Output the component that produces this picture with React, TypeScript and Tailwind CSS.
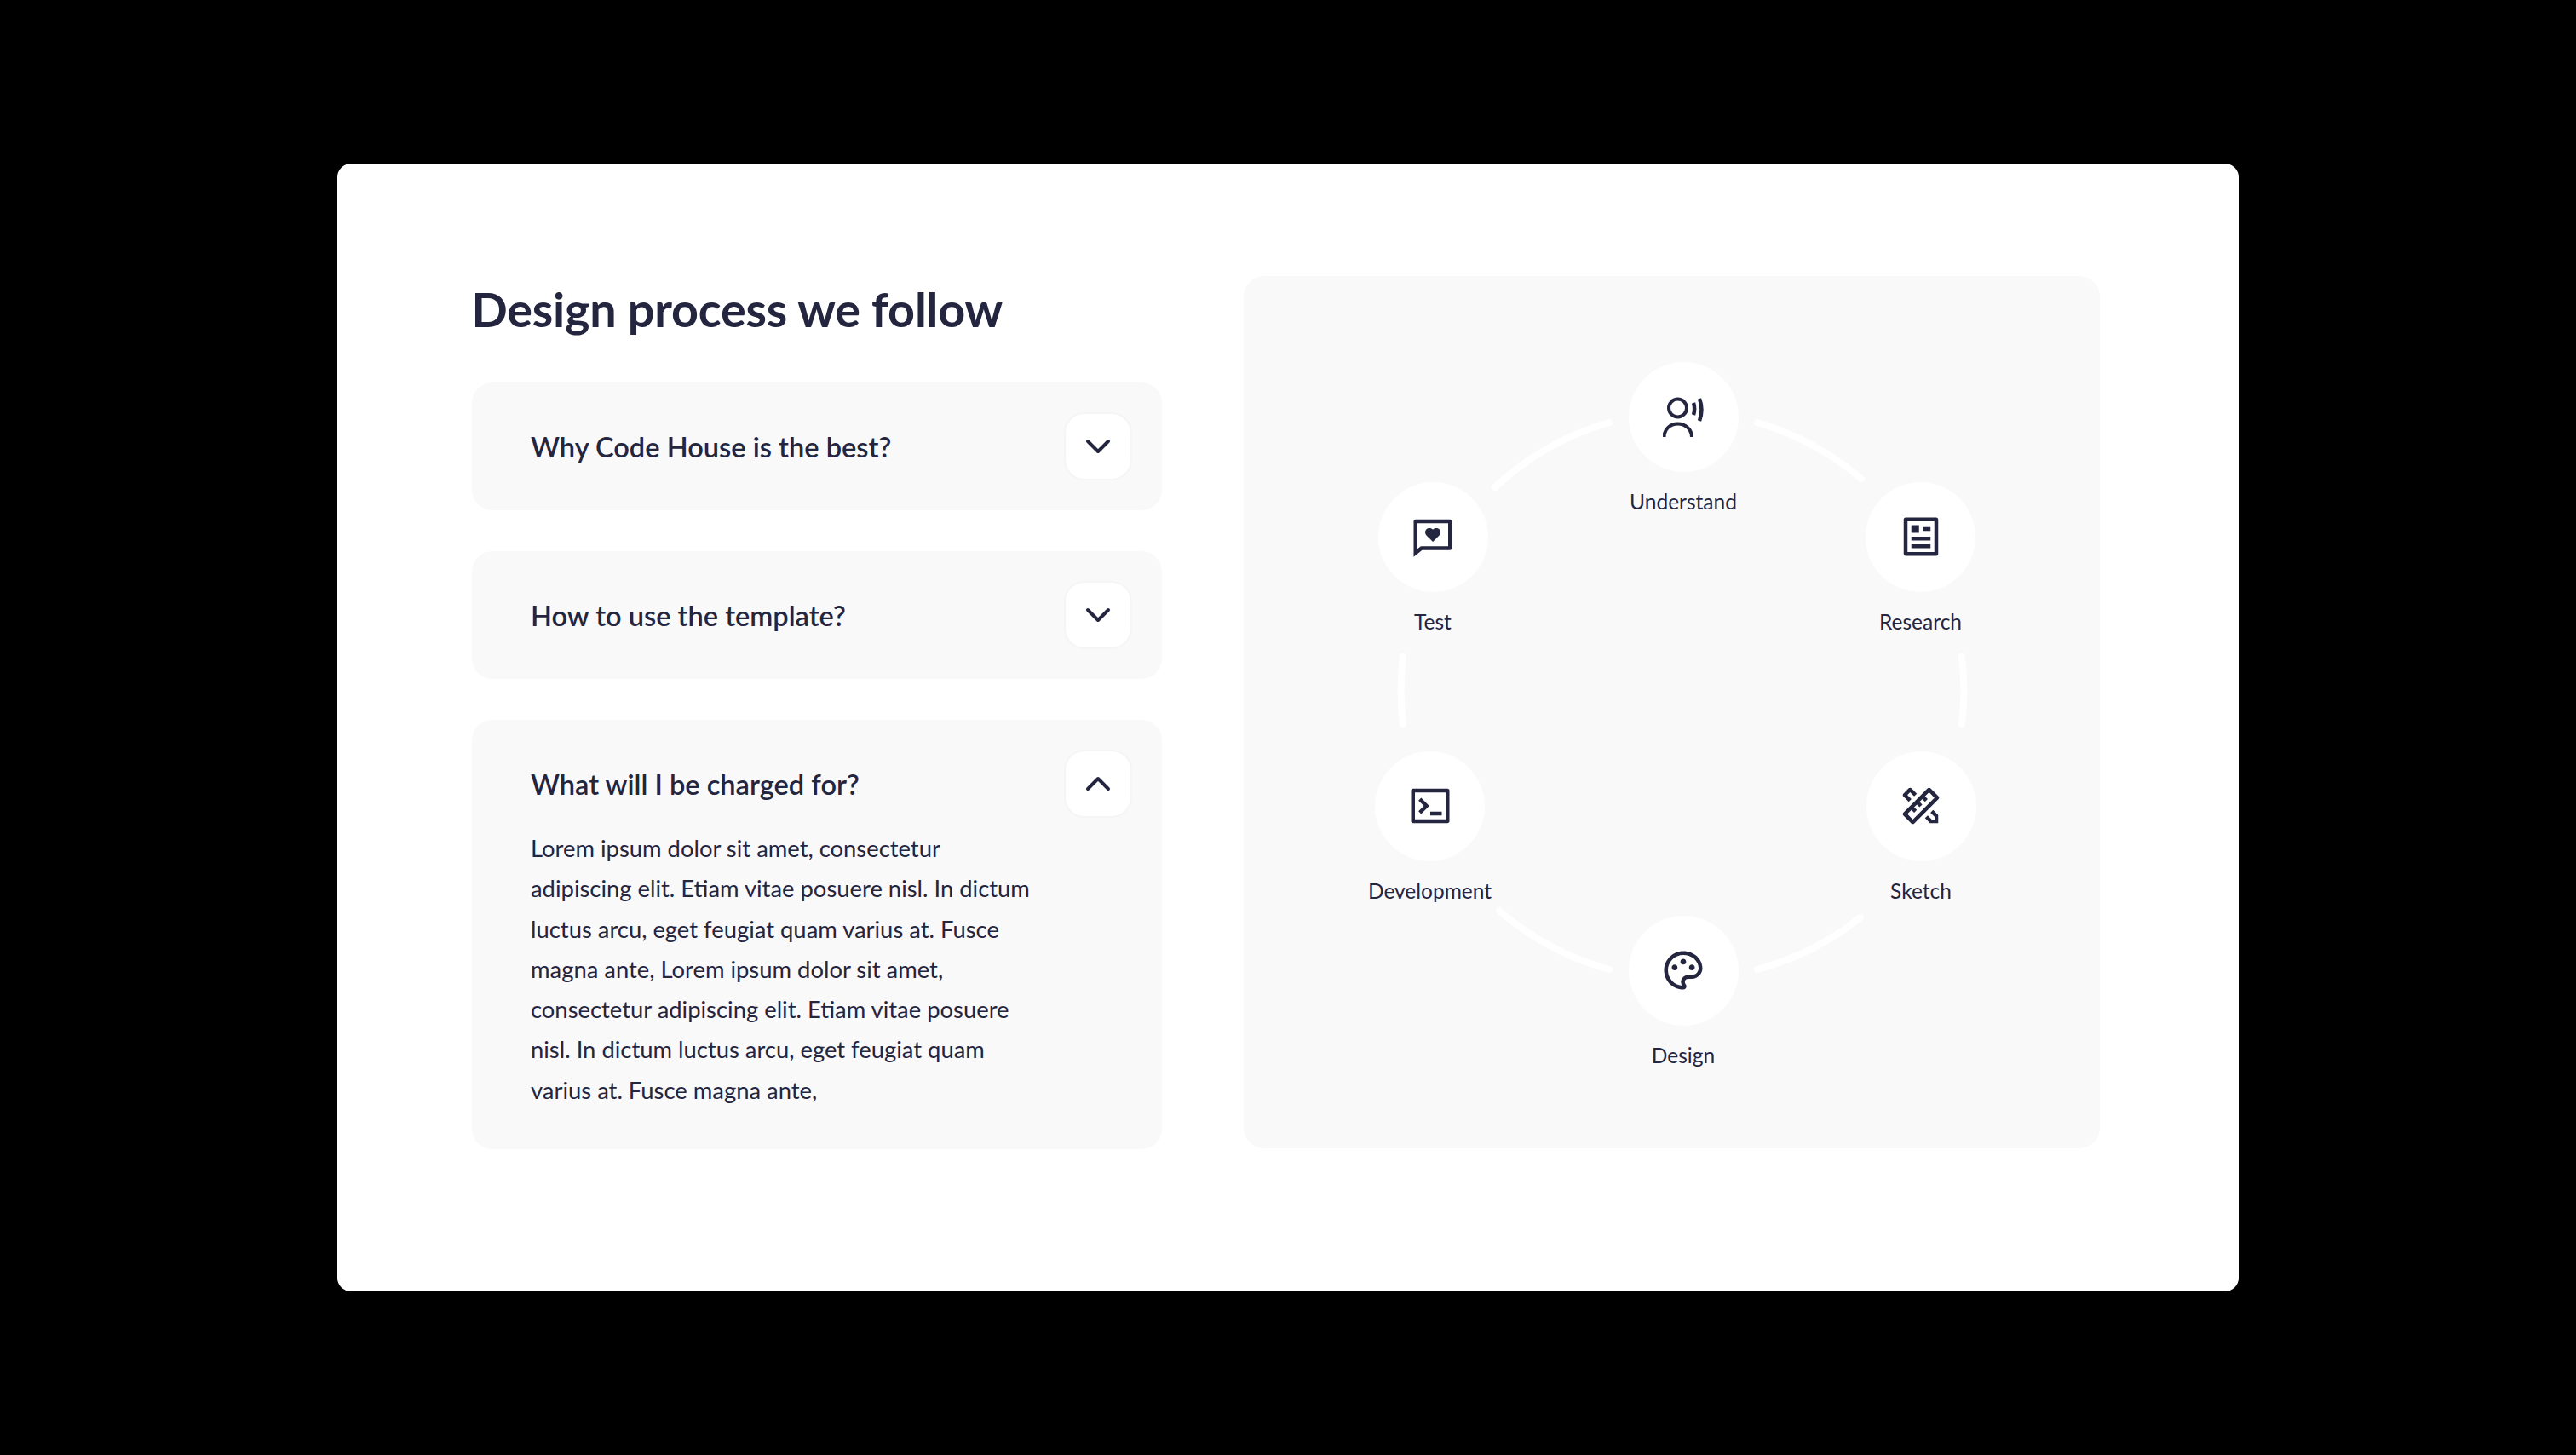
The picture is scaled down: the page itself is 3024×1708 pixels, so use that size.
import { ChevronDown, ChevronUp } from "lucide-react";
import { RiArticleLine, RiChatHeartLine, RiPaletteLine, RiPencilRuler2Line, RiTerminalBoxLine } from "react-icons/ri";
import type { ReactNode } from "react";

const font = "font-['Lato','Liberation_Sans',sans-serif]";

function IconButton({ up }: { up?: boolean }) {
  return (
    <div className="flex h-[80px] w-[80px] shrink-0 items-center justify-center rounded-[24px] border-2 border-[#f5f5f6] bg-white">
      {up ? <ChevronUp size={48} strokeWidth={2} /> : <ChevronDown size={48} strokeWidth={2} />}
    </div>
  );
}

function Question({ title, children, up }: { title: string; children?: ReactNode; up?: boolean }) {
  return (
    <div className="rounded-[24px] bg-[#f9f9fa] pb-[35px] pl-[69.500px] pr-[35px] pt-[35px]">
      <div className="flex items-center justify-between">
        <h3 className="h-[80px] text-[32.600px] font-semibold leading-[81px]">{title}</h3>
        <IconButton up={up} />
      </div>
      {children}
    </div>
  );
}

function UserVoice() {
  return (
    <svg width="48" height="48" viewBox="0 0 48 48" fill="none" stroke="currentColor" strokeWidth="4">
      <circle cx="17.5" cy="13" r="10.5" />
      <path d="M1.5 47c0-9 7-15.500 16-15.500S34 38 34 47" />
      <path d="M36 7c1.500 4.500 1.500 9.500 0 14" strokeWidth="4.500" />
      <path d="M43 2c3 8 3 18 0 26" strokeWidth="4.500" />
    </svg>
  );
}

const nodes = [
  { label: "Understand", x: 1976, y: 489.5, icon: <UserVoice />, labelY: 589 },
  { label: "Research", x: 2254.5, y: 630, icon: <RiArticleLine size={54} />, labelY: 730 },
  { label: "Sketch", x: 2255, y: 946, icon: <RiPencilRuler2Line size={54} />, labelY: 1046 },
  { label: "Design", x: 1976, y: 1139, icon: <RiPaletteLine size={54} />, labelY: 1239 },
  { label: "Development", x: 1678.5, y: 946, icon: <RiTerminalBoxLine size={54} />, labelY: 1046 },
  { label: "Test", x: 1682, y: 630, icon: <RiChatHeartLine size={54} />, labelY: 730 },
];

export default function App() {
  return (
    <div className={`${font} flex h-[1708px] w-[3024px] items-center justify-center bg-black text-[#24253f]`}>
      <div className="flex h-[1324px] w-[2232px] items-start gap-[96px] rounded-[16px] bg-white pl-[157.500px] pt-[132px]">
        <div className="w-[810.500px]">
          <h2 className="mb-[47px] text-[55.700px] font-bold leading-[78px] tracking-[-0.2px]">Design process we follow</h2>
          <div className="flex flex-col gap-[48px]">
            <Question title="Why Code House is the best?" />
            <Question title="How to use the template?" />
            <Question title="What will I be charged for?" up>
              <p className="mb-[11px] mt-[12px] whitespace-nowrap text-[27.400px] leading-[47.250px]">
                Lorem ipsum dolor sit amet, consectetur
                <br />
                adipiscing elit. Etiam vitae posuere nisl. In dictum
                <br />
                luctus arcu, eget feugiat quam varius at. Fusce
                <br />
                magna ante, Lorem ipsum dolor sit amet,
                <br />
                consectetur adipiscing elit. Etiam vitae posuere
                <br />
                nisl. In dictum luctus arcu, eget feugiat quam
                <br />
                varius at. Fusce magna ante,
              </p>
            </Question>
          </div>
        </div>
        <div className="relative h-[1024px] w-[1005px] rounded-[24px] bg-[#f9f9fa]">
          <svg className="absolute left-0 top-0" width="1005" height="1024" viewBox="1460 324 1005 1024" fill="none" stroke="#ffffff" strokeWidth="8" strokeLinecap="round">
            <path d="M1755 572A331 331 0 0 1 1889 496" />
            <path d="M2063 496A331 331 0 0 1 2185 562" />
            <path d="M2303 771A331 331 0 0 1 2303 850" />
            <path d="M1647 771A331 331 0 0 0 1647 850" />
            <path d="M1760 1069A331 331 0 0 0 1889 1138" />
            <path d="M2063 1138A331 331 0 0 0 2184 1077" />
          </svg>
          {nodes.map((n) => (
            <div key={n.label}>
              <div
                className="absolute flex h-[129px] w-[129px] items-center justify-center rounded-full bg-white"
                style={{ left: n.x - 64.5 - 1460, top: n.y - 64.5 - 324 }}
              >
                {n.icon}
              </div>
              <div
                className="absolute w-[240px] text-center text-[24.500px] leading-[36px]"
                style={{ left: n.x - 120 - 1460, top: n.labelY - 18 - 324 }}
              >
                {n.label}
              </div>
            </div>
          ))}
        </div>
      </div>
    </div>
  );
}
